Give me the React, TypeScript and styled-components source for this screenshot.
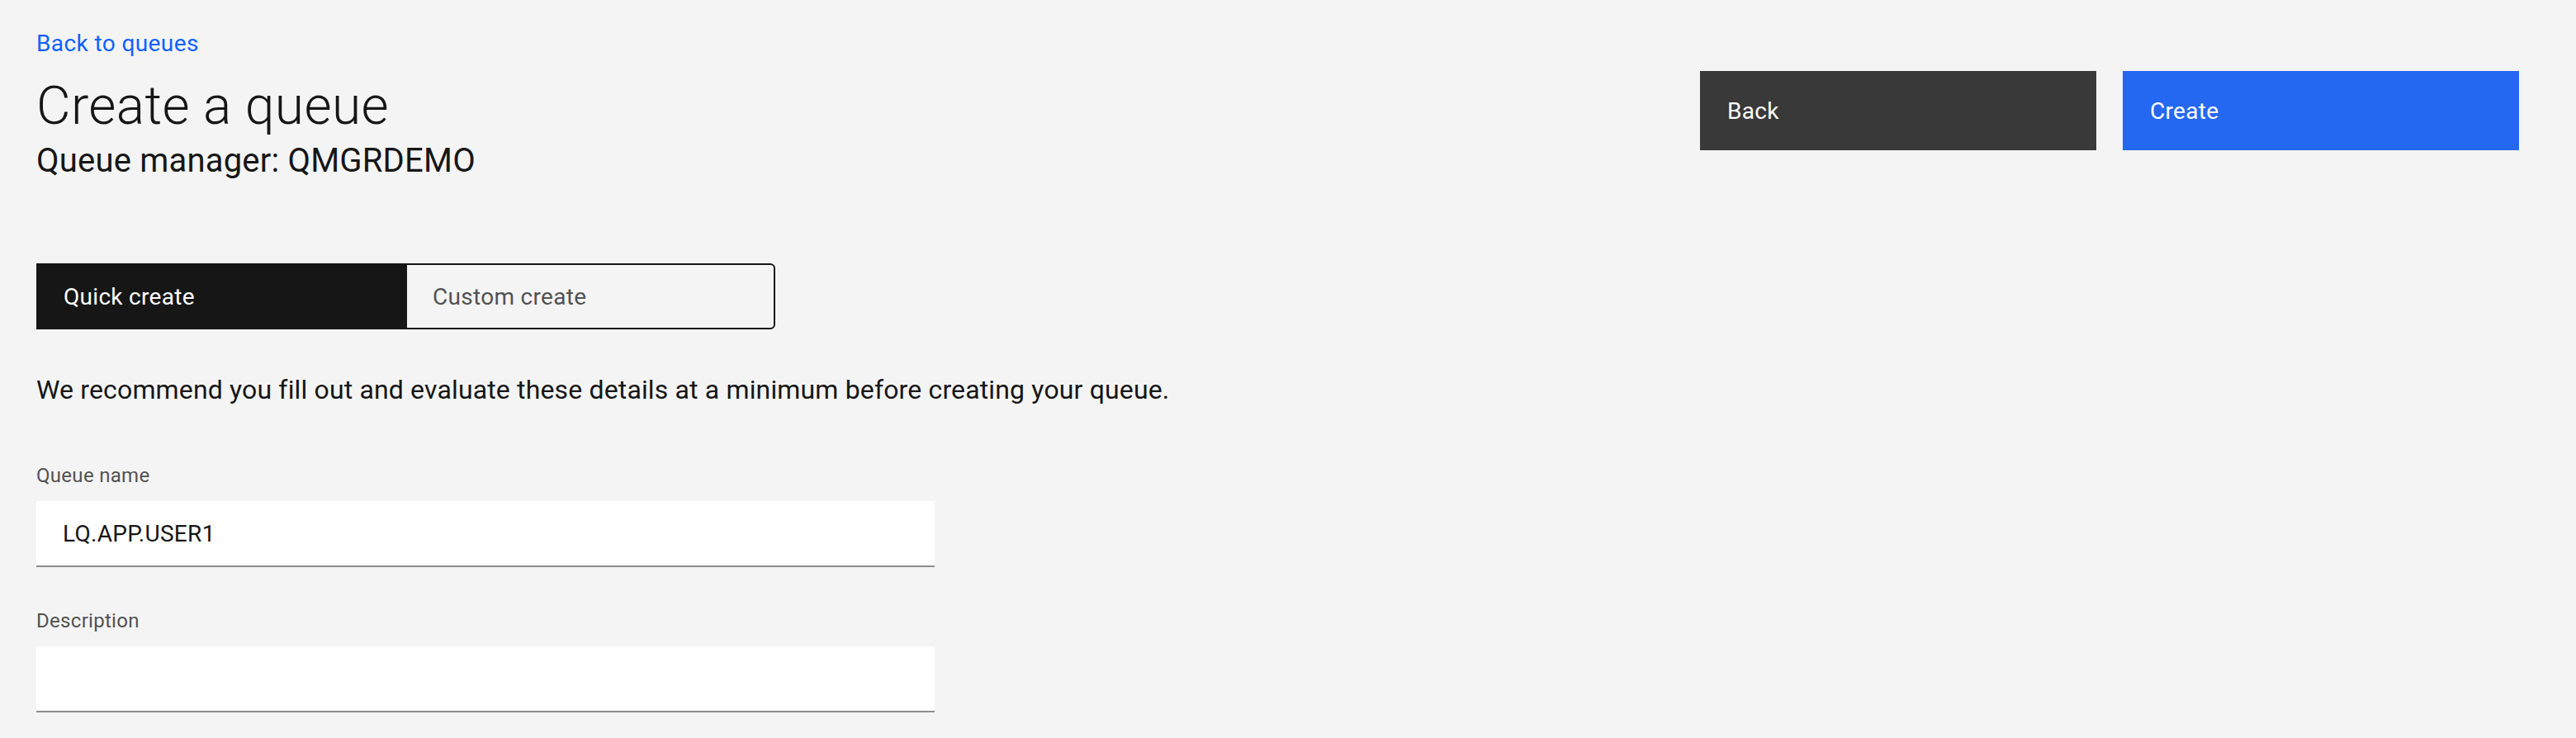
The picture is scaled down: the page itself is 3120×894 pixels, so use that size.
import React, { useState } from 'react';
import styled, { createGlobalStyle } from 'styled-components';

const GlobalStyle = createGlobalStyle`
  html, body {
    margin: 0;
    padding: 0;
    background: #f4f4f4;
  }
  body {
    font-family: Roboto, "Liberation Sans", sans-serif;
    color: #161616;
  }
  * {
    box-sizing: border-box;
  }
`;

const Page = styled.div`
  width: 3120px;
  height: 894px;
  background: #f4f4f4;
  padding: 35px 69px 0 44px;
  overflow: hidden;
`;

const Header = styled.header`
  display: flex;
  justify-content: space-between;
  align-items: flex-start;
`;

const TitleBlock = styled.div`
  display: flex;
  flex-direction: column;
`;

const BackLink = styled.a`
  font-size: 28px;
  line-height: 36px;
  letter-spacing: 0.4px;
  color: #0f62fe;
  text-decoration: none;
  cursor: pointer;
`;

const Title = styled.h1`
  margin: 18px 0 0;
  font-size: 64px;
  line-height: 80px;
  font-weight: 300;
  letter-spacing: 0.4px;
  color: #161616;
`;

const Subtitle = styled.h2`
  margin: 0;
  font-size: 40px;
  line-height: 52px;
  font-weight: 400;
  letter-spacing: 0.2px;
  color: #161616;
`;

const Actions = styled.div`
  display: flex;
  gap: 32px;
  margin-top: 51px;
`;

const ActionButton = styled.button<{ $kind: 'secondary' | 'primary' }>`
  width: 480px;
  height: 96px;
  border: none;
  padding: 0 33px;
  display: flex;
  align-items: center;
  font-family: inherit;
  font-size: 28px;
  letter-spacing: 0.3px;
  color: #ffffff;
  background: ${(p) => (p.$kind === 'primary' ? '#2468f2' : '#393939')};
  cursor: pointer;
`;

const Toggle = styled.div`
  margin-top: 98px;
  width: 895px;
  height: 80px;
  display: grid;
  grid-template-columns: 447px 1fr;
  border: 2px solid #161616;
  border-radius: 0 6px 6px 0;
  overflow: hidden;
`;

const ToggleOption = styled.button<{ $active?: boolean }>`
  border: none;
  padding: 0 31px;
  display: flex;
  align-items: center;
  font-family: inherit;
  font-size: 28px;
  letter-spacing: 0.3px;
  background: ${(p) => (p.$active ? '#161616' : 'transparent')};
  color: ${(p) => (p.$active ? '#ffffff' : '#525252')};
  cursor: pointer;
`;

const Intro = styled.p`
  margin: 51px 0 0;
  font-size: 32px;
  line-height: 44px;
  letter-spacing: 0.15px;
  color: #161616;
`;

const Form = styled.div`
  display: flex;
  flex-direction: column;
  width: 1088px;
  margin-top: 66px;
  gap: 49px;
`;

const Field = styled.label`
  display: flex;
  flex-direction: column;
  gap: 15px;
`;

const FieldLabel = styled.span`
  font-size: 24px;
  line-height: 32px;
  letter-spacing: 0.3px;
  color: #525252;
`;

const TextInput = styled.input`
  height: 80px;
  width: 100%;
  border: none;
  border-bottom: 2px solid #8d8d8d;
  background: #ffffff;
  padding: 0 32px;
  font-family: inherit;
  font-size: 28px;
  letter-spacing: 0.3px;
  color: #161616;
  outline: none;
`;

export default function App() {
  const [mode, setMode] = useState<'quick' | 'custom'>('quick');
  const [name, setName] = useState('LQ.APP.USER1');
  const [description, setDescription] = useState('');

  return (
    <>
      <GlobalStyle />
      <Page>
        <Header>
          <TitleBlock>
            <BackLink>Back to queues</BackLink>
            <Title>Create a queue</Title>
            <Subtitle>Queue manager: QMGRDEMO</Subtitle>
          </TitleBlock>
          <Actions>
            <ActionButton $kind="secondary">Back</ActionButton>
            <ActionButton $kind="primary">Create</ActionButton>
          </Actions>
        </Header>

        <Toggle>
          <ToggleOption $active={mode === 'quick'} onClick={() => setMode('quick')}>
            Quick create
          </ToggleOption>
          <ToggleOption $active={mode === 'custom'} onClick={() => setMode('custom')}>
            Custom create
          </ToggleOption>
        </Toggle>

        <Intro>
          We recommend you fill out and evaluate these details at a minimum before creating your queue.
        </Intro>

        <Form>
          <Field>
            <FieldLabel>Queue name</FieldLabel>
            <TextInput value={name} onChange={(e) => setName(e.target.value)} />
          </Field>
          <Field>
            <FieldLabel>Description</FieldLabel>
            <TextInput value={description} onChange={(e) => setDescription(e.target.value)} />
          </Field>
        </Form>
      </Page>
    </>
  );
}
